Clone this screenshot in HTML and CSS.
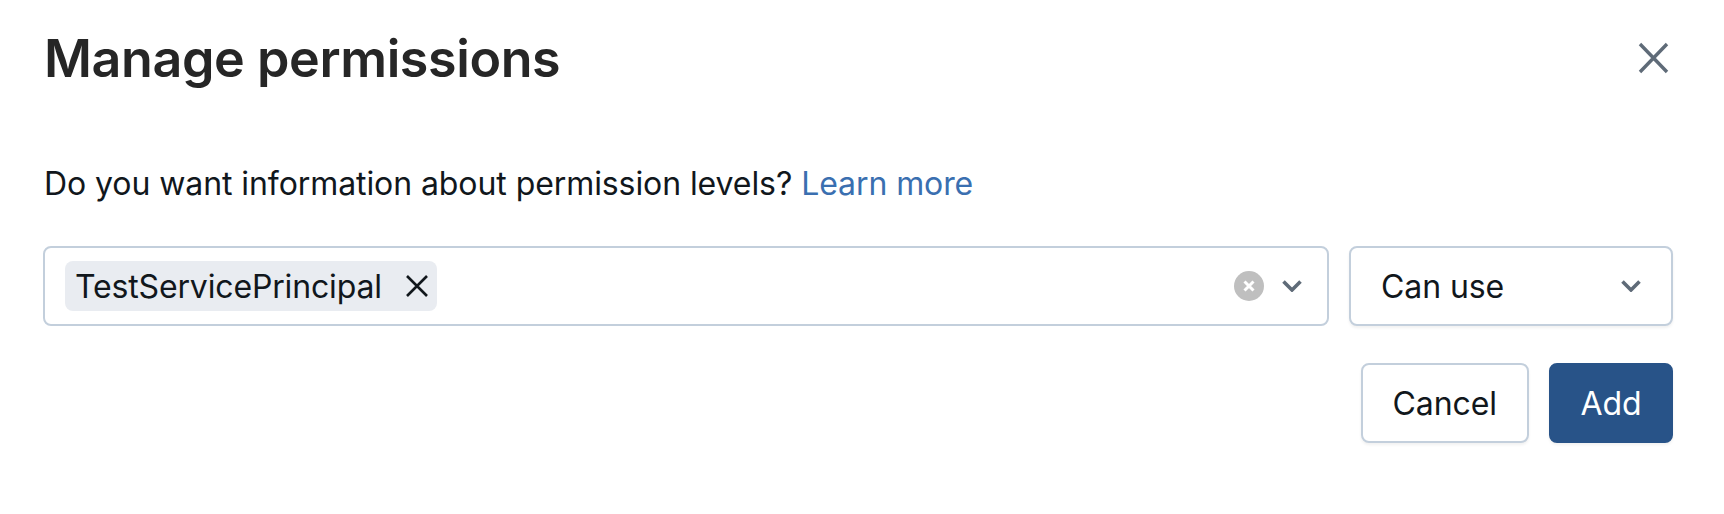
FILE: index.html
```html
<!DOCTYPE html>
<html lang="en">
<head>
    <meta charset="UTF-8">
    <title>Manage permissions</title>
    <link rel="stylesheet" href="styles.css">
</head>
<body>
    <div class="modal">
        <header class="modal-header">
            <h1>Manage permissions</h1>
            <svg class="close-icon" viewBox="0 0 32 32" width="32" height="32"><path d="M2 2l27 28M29 2L2 30"/></svg>
        </header>

        <p class="info">Do you want information about permission levels? <a href="#">Learn more</a></p>

        <div class="pickers">
            <div class="select select-principal">
                <span class="chip">
                    TestServicePrincipal
                    <svg class="chip-x" viewBox="0 0 22 22" width="22" height="22"><path d="M1 1l20 20M21 1L1 21"/></svg>
                </span>
                <span class="select-icons">
                    <span class="clear">
                        <svg viewBox="0 0 30 30" width="30" height="30"><circle cx="15" cy="15" r="15"/><path d="M10.5 10.5l9 9M19.5 10.5l-9 9"/></svg>
                    </span>
                    <svg class="chevron" viewBox="0 0 20 12" width="20" height="12"><path d="M1.5 1.5L10 10l8.5-8.5"/></svg>
                </span>
            </div>
            <div class="select select-level">
                <span>Can use</span>
                <svg class="chevron" viewBox="0 0 20 12" width="20" height="12"><path d="M1.5 1.5L10 10l8.5-8.5"/></svg>
            </div>
        </div>

        <div class="actions">
            <button class="btn">Cancel</button>
            <button class="btn btn-primary">Add</button>
        </div>
    </div>
</body>
</html>
```

FILE: styles.css
```css
body {
    margin: 0;
    background: white;
    color: #11171c;
    font-family: 'Inter', sans-serif;
    font-size: 32px;
    letter-spacing: -0.08px;
    overflow: hidden;
}
.modal {
    width: 1724px;
    height: 514px;
    box-sizing: border-box;
    padding: 26px 51px 0 44px;
}
.modal-header {
    display: flex;
    justify-content: space-between;
    align-items: flex-start;
    height: 90px;
}
.modal-header h1 {
    margin: 0;
    font-size: 52px;
    line-height: 66px;
    font-weight: 600;
    color: #262626;
    letter-spacing: -0.4px;
}
.close-icon {
    margin-top: 16px;
    margin-right: 3px;
    fill: none;
    stroke: #5f6b78;
    stroke-width: 3.4;
}
.info {
    margin: 0;
    padding-top: 47px;
    line-height: 42px;
}
.info a {
    color: #3a6fb0;
    text-decoration: none;
}
.pickers {
    display: flex;
    gap: 20px;
    margin-top: 41px;
    margin-left: -1px;
}
.select {
    display: flex;
    align-items: center;
    justify-content: space-between;
    height: 80px;
    box-sizing: border-box;
    background: white;
    border: 2px solid #c3cfdc;
    border-radius: 8px;
}
.select-principal {
    width: 1286px;
    padding: 0 25px 0 20px;
}
.select-level {
    width: 324px;
    padding: 0 30px;
    box-shadow: 0 2px 3px rgba(0, 0, 0, 0.06);
}
.chip {
    display: flex;
    align-items: center;
    height: 50px;
    padding: 0 9px 0 10px;
    gap: 24px;
    background: #e9ecf1;
    border-radius: 8px;
    letter-spacing: -0.15px;
}
.chip-x {
    fill: none;
    stroke: #11171c;
    stroke-width: 2.6;
}
.select-icons {
    display: flex;
    align-items: center;
    gap: 18px;
}
.clear {
    display: flex;
}
.clear circle {
    fill: #bfbfbf;
}
.clear path {
    fill: none;
    stroke: white;
    stroke-width: 3;
}
.chevron {
    fill: none;
    stroke: #5f6b78;
    stroke-width: 3.6;
}
.actions {
    display: flex;
    justify-content: flex-end;
    gap: 20px;
    margin-top: 37px;
}
.btn {
    height: 80px;
    padding: 0 30px;
    background: white;
    border: 2px solid #c3cfdc;
    border-radius: 8px;
    color: #11171c;
    font-family: inherit;
    font-size: 32px;
    letter-spacing: inherit;
    box-shadow: 0 2px 3px rgba(0, 0, 0, 0.06);
}
.btn-primary {
    padding: 0 29.5px;
    background: #285388;
    border-color: #285388;
    color: white;
}
```
